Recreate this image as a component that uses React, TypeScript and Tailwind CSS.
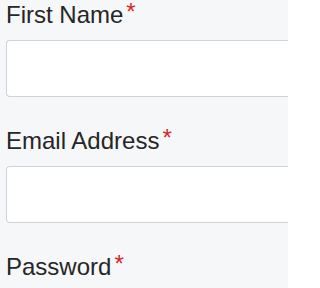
export default function App() {
  const fields = [
    { label: "First Name", type: "text" },
    { label: "Email Address", type: "email" },
    { label: "Password", type: "password" },
  ];

  return (
    <div
      className="h-[288px] w-[288px] overflow-hidden bg-[#f5f7f9] pl-[6px] text-[#262626]"
      style={{ fontFamily: '"Liberation Sans", Arial, sans-serif' }}
    >
      {fields.map((f) => (
        <div key={f.label} className="pb-[29px]">
          <label className="mb-[10px] block h-[30px] whitespace-nowrap text-[24px] leading-[30px]">
            {f.label}
            <span className="ml-[3px] inline-block -translate-y-[3px] leading-none text-[#d9262b]">*</span>
          </label>
          <input
            type={f.type}
            className="block h-[57px] w-full rounded-l-[4px] border border-r-0 border-[#cfd2d6] bg-white"
          />
        </div>
      ))}
    </div>
  );
}
